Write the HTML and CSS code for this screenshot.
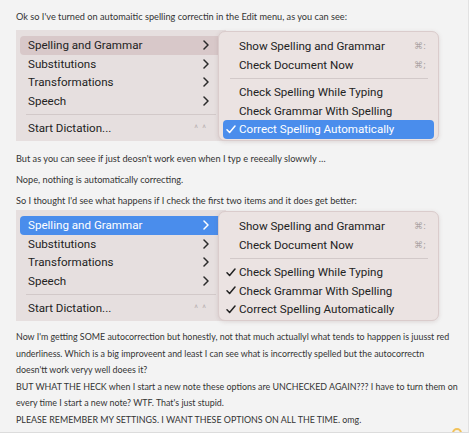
FILE: index.html
```html
<!DOCTYPE html>
<html>
	<head>
		<meta charset="utf-8" />
		<title>Note</title>
		<link rel="stylesheet" href="styles.css">
	</head>
	<body>
		<div class="note">
			<p class="first">Ok so I've turned on automaitic spelling correctin in the Edit menu, as you can see:</p>

			<div class="shot">
				<div class="menu">
					<div class="item sel"><span>Spelling and Grammar</span><svg class="chev" width="6" height="10" viewBox="0 0 6 10"><path d="M1 1l4 4-4 4" /></svg></div>
					<div class="item"><span>Substitutions</span><svg class="chev" width="6" height="10" viewBox="0 0 6 10"><path d="M1 1l4 4-4 4" /></svg></div>
					<div class="item"><span>Transformations</span><svg class="chev" width="6" height="10" viewBox="0 0 6 10"><path d="M1 1l4 4-4 4" /></svg></div>
					<div class="item"><span>Speech</span><svg class="chev" width="6" height="10" viewBox="0 0 6 10"><path d="M1 1l4 4-4 4" /></svg></div>
					<div class="sep"></div>
					<div class="item"><span>Start Dictation...</span><span class="keys">^ ^</span></div>
				</div>
				<div class="sub">
					<div class="row"><span class="tick"></span><span>Show Spelling and Grammar</span><span class="cmd">⌘:</span></div>
					<div class="row"><span class="tick"></span><span>Check Document Now</span><span class="cmd">⌘;</span></div>
					<div class="sep"></div>
					<div class="row"><span class="tick"></span><span>Check Spelling While Typing</span></div>
					<div class="row"><span class="tick"></span><span>Check Grammar With Spelling</span></div>
					<div class="row on"><span class="tick"><svg width="10" height="9" viewBox="0 0 10 9"><path d="M1 4.8l2.6 2.7L9 1" /></svg></span><span>Correct Spelling Automatically</span></div>
				</div>
			</div>

			<p class="after">But as you can seee if just deosn't work even when I typ e reeeally slowwly …</p>
			<p>Nope, nothing is automatically correcting.</p>
			<p class="tight">So I thought I'd see what happens if I check the first two items and it does get better:</p>

			<div class="shot">
				<div class="menu">
					<div class="item blue"><span>Spelling and Grammar</span><svg class="chev" width="6" height="10" viewBox="0 0 6 10"><path d="M1 1l4 4-4 4" /></svg></div>
					<div class="item"><span>Substitutions</span><svg class="chev" width="6" height="10" viewBox="0 0 6 10"><path d="M1 1l4 4-4 4" /></svg></div>
					<div class="item"><span>Transformations</span><svg class="chev" width="6" height="10" viewBox="0 0 6 10"><path d="M1 1l4 4-4 4" /></svg></div>
					<div class="item"><span>Speech</span><svg class="chev" width="6" height="10" viewBox="0 0 6 10"><path d="M1 1l4 4-4 4" /></svg></div>
					<div class="sep"></div>
					<div class="item"><span>Start Dictation...</span><span class="keys">^ ^</span></div>
				</div>
				<div class="sub">
					<div class="row"><span class="tick"></span><span>Show Spelling and Grammar</span><span class="cmd">⌘:</span></div>
					<div class="row"><span class="tick"></span><span>Check Document Now</span><span class="cmd">⌘;</span></div>
					<div class="sep"></div>
					<div class="row"><span class="tick"><svg width="10" height="9" viewBox="0 0 10 9"><path d="M1 4.8l2.6 2.7L9 1" /></svg></span><span>Check Spelling While Typing</span></div>
					<div class="row"><span class="tick"><svg width="10" height="9" viewBox="0 0 10 9"><path d="M1 4.8l2.6 2.7L9 1" /></svg></span><span>Check Grammar With Spelling</span></div>
					<div class="row"><span class="tick"><svg width="10" height="9" viewBox="0 0 10 9"><path d="M1 4.8l2.6 2.7L9 1" /></svg></span><span>Correct Spelling Automatically</span></div>
				</div>
			</div>

			<div class="rest">
				<p class="narrow">Now I'm getting SOME autocorrection but honestly, not that much actuallyl what tends to happpen is juusst red underliness. Which is a big improveent and least I can see what is incorrectly spelled but the autocorrectn doesn'tt work veryy well doees it?</p>
				<p class="wide">BUT WHAT THE HECK when I start a new note these options are UNCHECKED AGAIN??? I have to turn them on every time I start a new note? WTF. That's just stupid.</p>
				<p>PLEASE REMEMBER MY SETTINGS. I WANT THESE OPTIONS ON ALL THE TIME. omg.</p>
			</div>

			<span class="badge"></span>
		</div>
	</body>
</html>
```

FILE: styles.css
```css
*{
	padding: 0px;
	margin: 0px;
	box-sizing: border-box;
}
body{
	background: #ffffff;
	font-family: "Lato", "Open Sans", sans-serif;
	color: #333333;
}
.note{
	position: relative;
	width: 469px;
	height: 433px;
	padding: 8px 8px 0 16px;
	background: #f3f3f3;
	border-right: 1px solid #e2e2e2;
	border-bottom: 1px solid #dcdcdc;
	overflow: hidden;
}
.note p{
	font-size: 9.2px;
	line-height: 17px;
	margin-bottom: 4px;
}
.note p.first{
	margin-bottom: 5px;
}
.note p.after{
	margin-top: 8px;
}
.note p.tight{
	margin-bottom: 1px;
}
.rest{
	margin-top: 7px;
}
.rest p{
	font-size: 8.9px;
	line-height: 16.5px;
	margin-bottom: 0;
}
.rest p.narrow{
	margin-right: 6px;
}
.rest p.wide{
	margin-right: -6px;
}

/* menu screenshots */
.shot{
	position: relative;
	height: 112px;
	font-family: "Roboto", "Inter", sans-serif;
	font-size: 11.6px;
	color: #222222;
}
.menu{
	width: 210px;
	height: 111px;
	padding: 6px 0 4px;
	background: #e6dfdf;
}
.item{
	display: flex;
	align-items: center;
	height: 18.5px;
	margin: 0 4px;
	padding: 0 13px 0 8px;
	border-radius: 4px;
}
.item.sel{
	background: #d8c8c9;
}
.item.blue{
	background: #4a8dec;
	color: #ffffff;
}
.chev{
	margin-left: auto;
	fill: none;
	stroke: #2a2a2a;
	stroke-width: 1.5;
	stroke-linecap: round;
	stroke-linejoin: round;
}
.item.blue .chev{
	stroke: #ffffff;
}
.keys{
	margin-left: auto;
	margin-right: 2px;
	font-size: 9px;
	color: #b9b2b2;
	letter-spacing: 1px;
}
.menu .sep{
	height: 1px;
	margin: 4px 10px 4px 10px;
	background: #d2c9c9;
}
.sub{
	position: absolute;
	left: 202px;
	top: 1px;
	width: 221px;
	height: 110px;
	padding: 5px 4px 3px;
	background: #ebe3e2;
	border: 1px solid #dacccc;
	border-radius: 7px;
	box-shadow: 0 1px 4px rgba(120, 90, 90, 0.18);
}
.row{
	display: flex;
	align-items: center;
	height: 18.5px;
	padding: 0 8px 0 3px;
	border-radius: 4px;
}
.row.on{
	background: #4a8dec;
	color: #ffffff;
}
.tick{
	width: 13px;
	display: flex;
	align-items: center;
}
.tick svg{
	fill: none;
	stroke: #222222;
	stroke-width: 1.5;
	stroke-linecap: round;
	stroke-linejoin: round;
}
.row.on .tick svg{
	stroke: #ffffff;
}
.cmd{
	margin-left: auto;
	font-family: "DejaVu Sans", sans-serif;
	font-size: 9px;
	color: #aaa3a3;
}
.sub .sep{
	height: 1px;
	margin: 4px 6px 4px 7px;
	background: #d2c9c9;
}
.badge{
	position: absolute;
	right: 6px;
	bottom: -6px;
	width: 10px;
	height: 10px;
	border: 2px solid #f2c25a;
	border-radius: 50%;
}
```
